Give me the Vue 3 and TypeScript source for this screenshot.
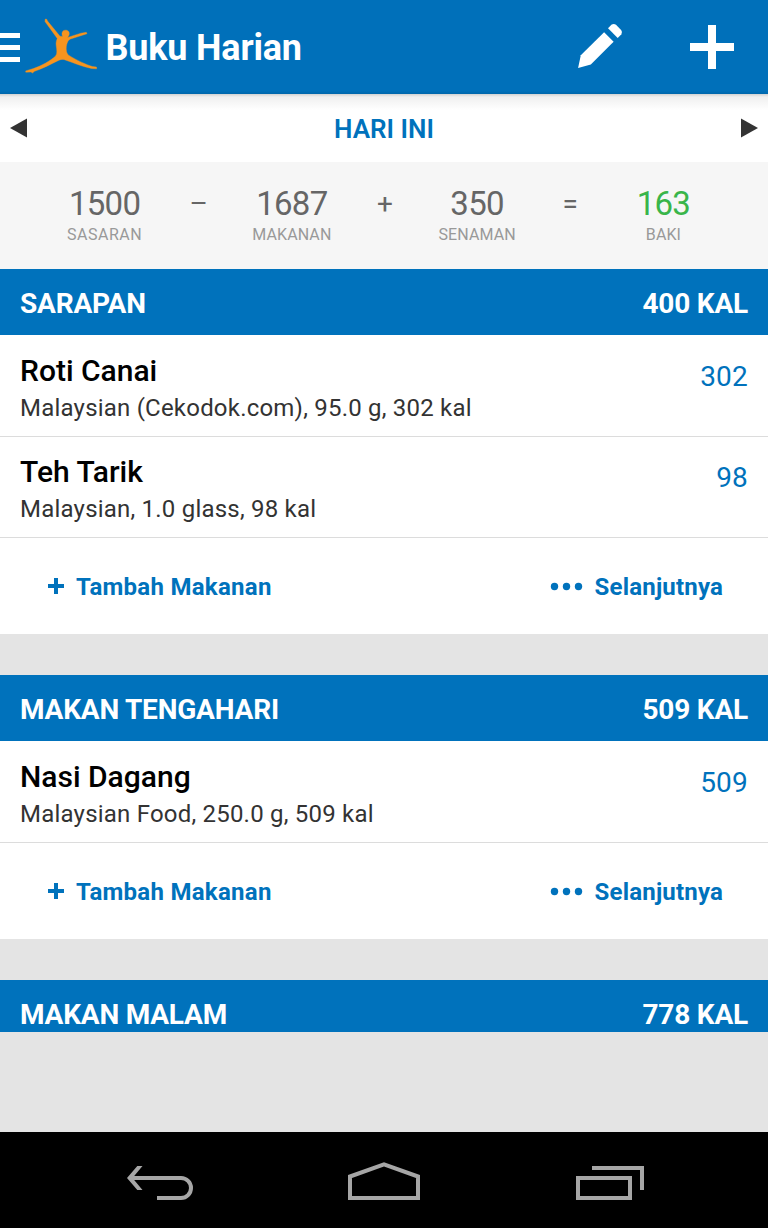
<script setup lang="ts">
interface Food { name: string; detail: string; kcal: number }
interface Meal { title: string; total: number; foods: Food[] }

const summary: { value: string; label?: string; kind: string }[] = [
  { value: '1500', label: 'SASARAN', kind: 'num goal' },
  { value: '–', kind: 'op' },
  { value: '1687', label: 'MAKANAN', kind: 'num eaten' },
  { value: '+', kind: 'op' },
  { value: '350', label: 'SENAMAN', kind: 'num' },
  { value: '=', kind: 'op equals' },
  { value: '163', label: 'BAKI', kind: 'num left' },
]

const meals: Meal[] = [
  {
    title: 'SARAPAN',
    total: 400,
    foods: [
      { name: 'Roti Canai', detail: 'Malaysian (Cekodok.com), 95.0 g, 302 kal', kcal: 302 },
      { name: 'Teh Tarik', detail: 'Malaysian, 1.0 glass, 98 kal', kcal: 98 },
    ],
  },
  {
    title: 'MAKAN TENGAHARI',
    total: 509,
    foods: [{ name: 'Nasi Dagang', detail: 'Malaysian Food, 250.0 g, 509 kal', kcal: 509 }],
  },
  { title: 'MAKAN MALAM', total: 778, foods: [] },
]
</script>

<template>
  <div class="screen">
    <header class="bar">
      <svg class="menu" width="20" height="30" viewBox="0 0 20 30"><path d="M0 0H20V5H0ZM0 12H20V17H0ZM0 24H20V29H0Z" fill="#fff" /></svg>
      <svg class="logo" width="74" height="58" viewBox="0 0 74 58">
        <path
          fill="#f7941e"
          stroke="#f7941e"
          stroke-width=".4"
          d="M20.2 1.2C21.3.6 22.4 1.4 22.3 2.8L35 18.2L37.6 18.4C36.2 15 37.4 12.4 40 12.2C43.2 11.8 45 14.2 44 17C43.4 18.5 42.8 19 42.6 19.4L56 15.2L61.3 14.3L62 15.7L58 17L45.5 21C42.4 22.4 41 27 41.3 32C41.5 34.5 42.3 36 43.6 37.2C52 42.5 61 46.5 67.5 48.6L71.5 49L71.6 50.8L66.5 50.5C57 48.5 48 44.6 39.5 41.7C37.5 41.1 35.5 41.4 33.5 42.4C25 46.5 18 50.5 9.5 53.3L7.5 55L6 54L.8 54.2L.7 52.9L8.5 50.5C17 47.5 25.5 42.8 30.6 38C32.6 35.8 31.7 31 31.2 27.5C30.8 24.4 31.5 22.5 32.3 20.4L20 3.6Z"
        />
      </svg>
      <h1 class="title">Buku Harian</h1>
      <svg class="pencil" width="46" height="46" viewBox="0 0 46 46" fill="#fff">
        <path d="M27.1 9.3L36.6 18.8L13.8 41.6L1.1 44.9L3.8 32.2Z" />
        <path d="M31 5.2L34.7 1.5Q37 .2 39 1.8L44.1 6.9Q45.8 9 44.4 11.2L40.7 14.9Z" />
      </svg>
      <svg class="add" width="44" height="44" viewBox="0 0 44 44"><path d="M18 0H26V18H44V26H26V44H18V26H0V18H18Z" fill="#fff" /></svg>
    </header>

    <nav class="day">
      <svg width="17" height="20" viewBox="0 0 17 20"><path d="M17 .5V19.5L0 10Z" fill="#333" /></svg>
      <span class="today">HARI INI</span>
      <svg width="17" height="20" viewBox="0 0 17 20"><path d="M0 .5V19.5L17 10Z" fill="#333" /></svg>
    </nav>

    <section class="summary">
      <div v-for="(s, i) in summary" :key="i" class="cell" :class="s.kind">
        <span class="value">{{ s.value }}</span>
        <span v-if="s.label" class="label">{{ s.label }}</span>
      </div>
    </section>

    <main class="diary">
      <section v-for="m in meals" :key="m.title" class="meal">
        <h2 class="meal-head"><span>{{ m.title }}</span><span>{{ m.total }} KAL</span></h2>
        <div v-if="m.foods.length" class="meal-body">
          <div v-for="f in m.foods" :key="f.name" class="food">
            <div>
              <div class="name">{{ f.name }}</div>
              <div class="detail">{{ f.detail }}</div>
            </div>
            <span class="kcal">{{ f.kcal }}</span>
          </div>
          <div class="actions">
            <span class="action">
              <svg width="16" height="16" viewBox="0 0 16 16"><path d="M6 0H10V6H16V10H10V16H6V10H0V6H6Z" fill="#0072bc" /></svg>
              <span class="add-text">Tambah Makanan</span>
            </span>
            <span class="action">
              <svg width="32" height="8" viewBox="0 0 32 8" fill="#0072bc"><circle cx="3.5" cy="4.5" r="3.7" /><circle cx="15.5" cy="4.5" r="3.7" /><circle cx="27.5" cy="4.5" r="3.7" /></svg>
              <span class="more-text">Selanjutnya</span>
            </span>
          </div>
        </div>
      </section>
    </main>

    <div class="ad-space"></div>

    <footer class="system">
      <svg width="68" height="40" viewBox="0 0 68 40" fill="none" stroke="#a6a6a6" stroke-width="4">
        <path d="M3 14H55A10 10 0 0 1 55 34H31" />
        <path d="M16.5 2H11.3L1 14L11.3 26H16.5L6.5 14Z" fill="#a6a6a6" stroke="none" />
      </svg>
      <svg class="home" width="72" height="40" viewBox="0 0 72 40" fill="none" stroke="#a6a6a6" stroke-width="4"><path d="M2 34V12.5L36 0.3L70 12.5V34Z" /></svg>
      <svg width="68" height="40" viewBox="0 0 68 40" fill="none" stroke="#a6a6a6" stroke-width="4"><path d="M2 14H54V34H2ZM16 4H66V26" /></svg>
    </footer>
  </div>
</template>

<style>
body { margin: 0; }
</style>

<style scoped>
.screen {
  width: 768px;
  height: 1228px;
  display: flex;
  flex-direction: column;
  overflow: hidden;
  background: #e4e4e4;
  font-family: Roboto, "Liberation Sans", sans-serif;
}
svg { display: block; flex: none; overflow: visible; }
h1, h2 { margin: 0; }
.bar {
  flex: none;
  height: 94px;
  box-sizing: border-box;
  display: flex;
  align-items: center;
  background: linear-gradient(#0070ba 91px, #0067ab 94px);
}
.menu { margin-top: 2px; }
.logo { margin-left: 5px; margin-top: -1px; }
.title {
  flex: 1;
  margin-left: 6.5px;
  padding-top: 2px;
  color: #fff;
  font-size: 36px;
  line-height: 44px;
  font-weight: 700;
  letter-spacing: -0.18px;
}
.pencil { margin-right: 67px; margin-top: -2px; }
.add { margin-right: 34px; }
.day {
  flex: none;
  height: 68px;
  box-sizing: border-box;
  padding: 0 10px;
  display: flex;
  align-items: center;
  justify-content: space-between;
  background: linear-gradient(#d2d2d2, #f0f0f0 3px, #f8f8f8 10px, #fff 16px);
}
.day svg { margin-top: -1px; }
.today {
  padding-top: 2px;
  color: #0072bc;
  font-size: 26px;
  font-weight: 600;
}
.summary {
  flex: none;
  height: 107px;
  box-sizing: border-box;
  padding: 22px 58px 0;
  display: grid;
  grid-template-columns: repeat(7, 1fr);
  background: #f6f6f6;
}
.cell { display: flex; flex-direction: column; align-items: center; color: #666; }
.value { font-size: 33px; line-height: 40px; letter-spacing: -0.7px; }
.op .value { font-size: 28px; letter-spacing: 0; padding-left: 2px; }
.equals .value { padding-left: 0; }
.eaten { padding-left: 2px; }
.goal .label { letter-spacing: 0.5px; }
.left .value { color: #39b54a; }
.label { margin-top: 2px; color: #999; font-size: 16px; line-height: 18px; letter-spacing: 0.1px; }
.diary { flex: none; height: 763px; overflow: hidden; }
.meal { margin-bottom: 41px; }
.meal-head {
  height: 66px;
  box-sizing: border-box;
  padding: 2px 20px 0;
  display: flex;
  align-items: center;
  justify-content: space-between;
  background: #0072bc;
  color: #fff;
  font-size: 28px;
  font-weight: 700;
  letter-spacing: -0.2px;
}
.meal-body { padding-top: 1px; background: #fff; }
.food {
  height: 101px;
  box-sizing: border-box;
  padding: 17px 20px 0;
  display: flex;
  justify-content: space-between;
  border-bottom: 1px solid #dcdcdc;
}
.name { color: #000; font-size: 30px; line-height: 36px; font-weight: 500; }
.detail { margin-top: 3px; color: #333; font-size: 24px; line-height: 32px; letter-spacing: 0.21px; }
.kcal { margin-top: 6px; color: #0072bc; font-size: 28px; line-height: 36px; letter-spacing: 0.2px; }
.actions {
  height: 96px;
  padding: 0 45px 0 48px;
  display: flex;
  align-items: center;
  justify-content: space-between;
}
.action { display: flex; align-items: center; gap: 12px; color: #0072bc; font-size: 24px; font-weight: 700; }
.add-text { padding-top: 2px; letter-spacing: 0.28px; }
.more-text { padding-top: 2px; letter-spacing: 0.18px; }
.ad-space { flex: 1; }
.system {
  flex: none;
  height: 96px;
  padding: 8px 124px 0 126px;
  box-sizing: border-box;
  display: flex;
  align-items: center;
  justify-content: space-between;
  background: #000;
}
.home { margin-right: 2px; }
</style>
